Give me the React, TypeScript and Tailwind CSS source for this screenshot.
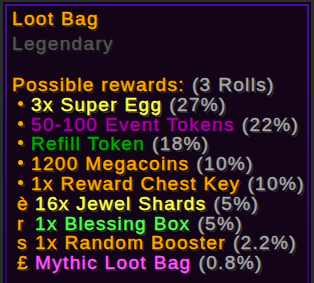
type Part = { text: string; color: string };
type Row = { mark: string; parts: Part[]; pct: string };

const gold = "text-[#ffaa00] [text-shadow:2px_2px_0_#3f2a00]";
const gray = "text-[#aaaaaa] [text-shadow:2px_2px_0_#2a2a2a]";

const rows: Row[] = [
  { mark: "•", parts: [{ text: "3x Super Egg", color: "text-[#ffff55] [text-shadow:2px_2px_0_#3f3f15]" }], pct: "(27%)" },
  { mark: "•", parts: [{ text: "50-100 Event Tokens", color: "text-[#aa00aa] [text-shadow:2px_2px_0_#2a002a]" }], pct: "(22%)" },
  { mark: "•", parts: [{ text: "Refill Token", color: "text-[#00aa00] [text-shadow:2px_2px_0_#002a00]" }], pct: "(18%)" },
  { mark: "•", parts: [{ text: "1200 Megacoins", color: gold }], pct: "(10%)" },
  { mark: "•", parts: [{ text: "1x Reward Chest Key", color: gold }], pct: "(10%)" },
  { mark: "è", parts: [{ text: "16x Jewel Shards", color: "text-[#ffff55] [text-shadow:2px_2px_0_#3f3f15]" }], pct: "(5%)" },
  { mark: "r", parts: [{ text: "1x Blessing Box", color: "text-[#55ff55] [text-shadow:2px_2px_0_#153f15]" }], pct: "(5%)" },
  { mark: "s", parts: [{ text: "1x Random Booster", color: gold }], pct: "(2.2%)" },
  { mark: "£", parts: [{ text: "Mythic Loot Bag", color: "text-[#ff55ff] [text-shadow:2px_2px_0_#3f153f]" }], pct: "(0.8%)" },
];

function RewardRow({ row }: { row: Row }) {
  const bullet = row.mark === "•";
  return (
    <div className="flex items-start h-[19.8px] whitespace-nowrap">
      {bullet ? (
        <div className="w-[19px] pl-[6px] pt-[6px]">
          <div className="w-[5px] h-[5px] rounded-full bg-[#ffaa00] shadow-[2px_2px_0_#3f2a00]" />
        </div>
      ) : (
        <span className={`w-[23px] pl-[5px] ${gold}`}>{row.mark}</span>
      )}
      {row.parts.map((p, i) => (
        <span key={i} className={p.color}>
          {p.text}
        </span>
      ))}
      <span className={`ml-[7px] ${gray}`}>{row.pct}</span>
    </div>
  );
}

export default function App() {
  return (
    <div className="w-[314px] h-[283px] overflow-hidden bg-[#2a2e2e] pt-[2px] pl-[3px] font-['Liberation_Sans',sans-serif] text-[19px] leading-[19.8px] tracking-[1.35px] [-webkit-text-stroke:0.45px_currentcolor]">
      {/* tooltip frame */}
      <div className="w-[308px] h-[300px] bg-[#130418] p-[2px]">
        <div className="h-full bg-gradient-to-b from-[#44109e] to-[#260868] p-[2px]">
          <div className="h-full bg-[#130418] pl-[5px] pt-[3px]">
            <div className={`h-[25px] ${gold}`}>Loot Bag</div>
            <div className="h-[41px] text-[#555555] [text-shadow:2px_2px_0_#151515]">Legendary</div>
            <div className="h-[19.8px] whitespace-nowrap">
              <span className={gold}>Possible rewards:</span>
              <span className={`ml-[7px] ${gray}`}>(3 Rolls)</span>
            </div>
            {rows.map((r, i) => (
              <RewardRow key={i} row={r} />
            ))}
          </div>
        </div>
      </div>
    </div>
  );
}
